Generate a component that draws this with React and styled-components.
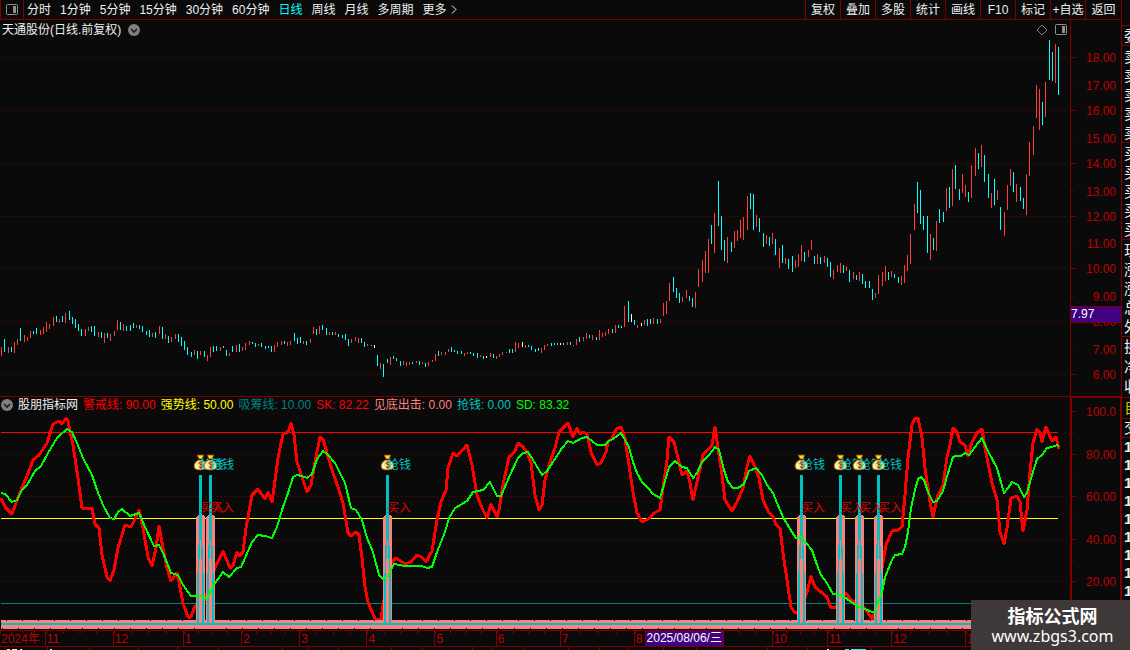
import React, { useState } from "react";
import styled, { createGlobalStyle } from "styled-components";

const GlobalStyle = createGlobalStyle`
    * {
        box-sizing: border-box;
    }
    body {
        margin: 0;
        background-color: #0a0a0a;
        font-family: "Liberation Sans", "Noto Sans CJK SC", sans-serif;
        font-size: 12px;
        color: #f0f0f0;
    }
`;

const Page = styled.div`
    display: grid;
    grid-template-columns: minmax(0, 1fr) 9px;
    min-height: 100vh;
    overflow: hidden;
`;

const Main = styled.main`
    display: flex;
    flex-direction: column;
    min-width: 0;
`;

const Toolbar = styled.nav`
    display: flex;
    justify-content: space-between;
    height: 20px;
    border-bottom: 1px solid #800000;
`;

const Periods = styled.div`
    display: flex;
    align-items: center;
    gap: 9px;
`;

const Tools = styled.div`
    display: flex;
`;

const LayoutButton = styled.button`
    display: flex;
    align-items: center;
    justify-content: center;
    width: 24px;
    height: 19px;
    margin-right: -6px;
    padding: 0;
    background: none;
    border: solid #800000;
    border-width: 0 1px;
`;

const PeriodButton = styled.button`
    display: flex;
    align-items: center;
    gap: 4px;
    padding: 0;
    border: none;
    background: none;
    font: inherit;
    line-height: 18px;
    white-space: nowrap;
    color: ${(props) => (props.$active ? "#00ffff" : "#f0f0f0")};
`;

const ToolButton = styled.button`
    width: 35px;
    padding: 0;
    border: none;
    border-left: 1px solid #800000;
    background: none;
    font: inherit;
    line-height: 18px;
    white-space: nowrap;
    color: #f0f0f0;
    &:last-child{
        width: 36px;
    }
`;

const Panel = styled.section`
    display: flex;
    border-top: ${(props) => (props.$divided ? "1px solid #800000" : "none")};
`;

const PanelBody = styled.div`
    flex: 1;
    min-width: 0;
`;

const TitleRow = styled.header`
    display: flex;
    align-items: center;
    justify-content: space-between;
    height: 18px;
    padding: 1px 3px 0 2px;
`;

const TitleGroup = styled.div`
    display: flex;
    align-items: center;
    gap: 7px;
`;

const Title = styled.h1`
    margin: 0;
    font-size: 12px;
    font-weight: 400;
    line-height: 18px;
`;

const Legend = styled.header`
    display: flex;
    align-items: center;
    gap: 5px;
    height: 16px;
    padding-left: 1px;
    white-space: nowrap;
`;

const LegendItem = styled.span`
    line-height: 16px;
    color: ${(props) => props.$color};
`;

const Plot = styled.svg`
    display: block;
    width: 100%;
    height: ${(props) => props.$height}px;
`;

const Axis = styled.svg`
    display: block;
    flex: none;
    width: 51px;
    height: ${(props) => props.$height}px;
`;

const TimeRow = styled.div`
    position: relative;
    display: flex;
    height: 17px;
    padding-right: 51px;
    border: solid #800000;
    border-width: 1px 0;
    color: #c00000;
`;

const Month = styled.div`
    flex: ${(props) => props.$days} 1 0;
    min-width: 0;
    padding-left: 1px;
    border-left: ${(props) => (props.$first ? "none" : "1px solid #800000")};
    background: linear-gradient(90deg, #800000 1px, transparent 1px) 0 0 / 25% 3px repeat-x;
    line-height: 16px;
    white-space: nowrap;
`;

const DateMarker = styled.div`
    position: absolute;
    top: -1px;
    left: 57.5%;
    padding: 0 1px;
    border: 1px solid #800000;
    background-color: #400080;
    color: #ffffff;
    line-height: 15px;
`;

const BottomStrip = styled.svg`
    display: block;
    width: 100%;
    height: 3px;
`;

const Sidebar = styled.aside`
    padding-top: 25px;
    border-left: 1px solid #800000;
    overflow: hidden;
`;

const QuoteGroup = styled.div`
    padding: ${(props) => props.$pad || 0}px 0 0 2px;
    border-top: 1px solid #800000;
    color: ${(props) => props.$color || "#f0f0f0"};
    font-size: 15px;
    font-weight: ${(props) => (props.$bold ? 700 : 400)};
    line-height: ${(props) => props.$line}px;
`;

const QuoteRow = styled.div`
    white-space: nowrap;
`;

const SiteBadge = styled.footer`
    position: fixed;
    right: 0;
    bottom: 0;
    display: flex;
    flex-direction: column;
    align-items: center;
    width: 159px;
    height: 50px;
    padding: 4px 0 0 4px;
    background-color: #3e3838;
    color: #ffffff;
`;

const SiteName = styled.strong`
    font-family: "Noto Sans CJK SC", sans-serif;
    font-size: 18px;
    line-height: 22px;
`;

const SiteLink = styled.a`
    font-family: "Noto Sans", sans-serif;
    font-size: 16px;
    line-height: 20px;
    color: #ffffff;
    text-decoration: none;
`;

const periods = ["分时", "1分钟", "5分钟", "15分钟", "30分钟", "60分钟", "日线", "周线", "月线", "多周期"];
const tools = ["复权", "叠加", "多股", "统计", "画线", "F10", "标记", "+自选", "返回"];

const legend = [
    ["股朋指标网", "#f0f0f0"],
    ["警戒线: 90.00", "#ff0000"],
    ["强势线: 50.00", "#ffff00"],
    ["吸筹线: 10.00", "#008080"],
    ["SK: 82.22", "#ff0000"],
    ["见底出击: 0.00", "#ff8080"],
    ["抢钱: 0.00", "#00c0c0"],
    ["SD: 83.32", "#00ff00"],
];

// label, width on the time scale; the date marker lies over the ninth month
const months = [
    ["2024年", 45], ["11", 68], ["12", 70], ["1", 58], ["2", 58], ["3", 67], ["4", 68],
    ["5", 61], ["6", 64], ["7", 74], ["8", 71], ["", 67], ["10", 55], ["11", 64], ["12", 74], ["1", 106],
];

const quoteGroups = [
    { rows: ["委"], line: 19 },
    { rows: ["卖", "卖", "卖", "卖", "卖"], line: 19, pad: 1 },
    { rows: ["买", "买", "买", "买", "买"], line: 19, pad: 1 },
    { rows: ["现", "涨", "涨", "总", "外"], line: 19, pad: 1 },
    { rows: ["换", "净", "收"], line: 20 },
    { rows: ["自"], line: 20, color: "#c8c800" },
    { rows: ["交"], line: 18 },
    { rows: ["1", "1", "1", "1", "1", "1", "1", "1", "1"], line: 18, bold: true },
];

// r = up, c = down, w = flat; x, high, low
const candles = `
r1,347,356 c4,339,352 r8,347,353 c11,347,352 r14,342,353 r17,339,345 c20,328,341 r24,335,342 r27,337,341
r30,331,338 c33,331,334 c36,328,334 r40,330,335 r43,327,334 r46,322,332 r49,324,329 r53,317,326 c56,316,322
r59,319,323 c62,316,322 r65,313,323 c69,311,320 c72,317,324 c75,319,328 c78,324,331 c81,329,336 r85,329,336
r88,327,331 c91,326,332 c94,326,336 r98,332,337 c101,332,338 r104,333,343 c107,333,338 r110,334,341 r114,331,336
r117,320,330 c120,322,330 r123,324,331 c126,326,331 c130,325,331 c133,323,328 r136,325,328 c139,325,329
c142,326,332 c146,331,335 c149,330,337 r152,333,337 c155,332,338 r159,326,334 c162,327,339 r165,334,339
c168,336,343 r171,337,342 r175,334,339 c178,334,342 c181,337,346 c184,341,350 c187,347,355 c191,352,357
r194,350,355 c197,351,359 r200,351,355 c204,351,357 r207,355,361 r210,347,357 c213,346,352 c216,346,351
r220,347,351 c223,346,348 c226,350,356 r229,353,356 c232,346,352 r236,345,352 c239,344,352 r242,347,351
r245,343,350 r249,341,345 c252,342,344 c255,343,347 r258,344,346 c261,343,347 c265,346,349 c268,346,348
c271,346,352 r274,345,352 r277,342,347 r281,341,345 c284,341,344 r287,342,346 r290,341,345 c294,333,341
c297,338,344 c300,337,343 r303,341,344 c306,341,345 r310,339,343 r313,327,334 c316,329,335 r319,326,334
c322,325,330 c326,328,335 r329,332,335 c332,332,335 r335,332,335 c338,334,337 c342,335,338 c345,334,340
c348,339,346 r351,339,343 r355,337,341 r358,338,343 c361,338,343 c364,342,347 r367,344,346 c371,345,346
w374,345,348 c377,355,366 r380,363,369 c383,364,377 c387,359,363 r390,357,365 c393,356,359 c396,358,361
c400,361,366 r403,361,365 r406,362,366 r409,362,365 c412,362,364 r416,361,363 c419,361,365 r422,362,364
c425,363,367 r428,362,366 r432,360,362 r435,354,361 c438,351,356 r441,352,355 r445,352,355 r448,349,352
c451,347,352 c454,350,352 c457,351,354 c461,351,354 r464,353,356 r467,352,354 c470,352,354 c473,353,356
c477,353,358 r480,355,357 c483,356,359 w486,356,358 r490,353,357 c493,354,358 r496,356,359 r499,354,357
r502,352,355 r506,352,353 c509,349,353 c512,349,353 r515,342,352 r518,343,348 w522,342,347 r525,345,348
c528,345,347 c531,346,350 c535,349,352 c538,348,351 r541,348,353 r544,345,350 r547,344,346 c551,343,346
c554,343,345 c557,343,345 w560,343,345 c563,343,345 r567,342,345 c570,342,345 r573,345,346 r576,339,345
c579,337,342 r583,337,341 r586,333,339 c589,335,338 r592,335,340 c596,337,340 r599,330,340 r602,333,337
r605,332,336 r608,329,334 c612,329,333 r615,325,333 c618,325,328 c621,326,328 r624,306,327 c628,301,322
w631,314,322 c634,320,325 r637,325,328 w641,323,326 r644,320,325 c647,319,326 c650,319,324 r653,318,324
c657,319,324 r660,319,323 r663,303,316 r666,301,314 r669,283,301 c673,277,292 c676,288,298 c679,293,303
r682,297,302 r686,290,298 c689,296,301 c692,298,307 r695,292,308 r698,269,287 r702,260,282 r705,251,273
r708,239,273 c711,225,244 r714,213,253 c718,181,226 c721,216,250 c724,240,261 r727,237,263 c731,242,252
r734,231,248 r737,230,241 r740,220,238 r743,217,240 r747,196,230 c750,193,209 c753,194,230 r756,215,227
c759,218,232 c763,233,247 r766,235,244 c769,237,246 r772,233,244 c775,239,255 r779,248,268 c782,245,263
r785,258,264 c788,259,269 c792,256,272 r795,260,268 r798,254,267 r801,245,261 c804,252,262 r808,250,257
r811,240,250 c814,256,264 r817,254,264 c820,257,264 r824,256,263 c827,258,267 c830,262,277 r833,270,279
r837,265,272 r840,263,273 c843,265,273 r846,266,271 c849,270,282 r853,272,279 c856,275,280 r859,272,281
c862,274,284 c865,281,288 c869,281,288 c872,289,300 r875,293,298 r878,275,294 r882,272,286 r885,266,281
c888,272,280 r891,271,277 c894,274,278 c898,277,283 r901,276,285 r904,265,283 r907,255,271 r910,234,264
r914,204,230 c917,182,213 c920,190,224 c923,216,230 c927,216,253 r930,234,260 c933,238,250 r936,221,251
c939,209,223 c943,212,222 r946,188,211 c949,187,208 r952,169,206 c955,165,189 c959,189,200 r962,174,193
r965,185,197 c968,192,202 r971,165,198 r975,148,176 c978,153,169 r981,145,167 c984,155,182 c988,174,198
r991,193,208 c994,179,205 r997,190,200 c1000,207,230 r1004,212,236 r1007,185,210 r1010,169,186 c1013,172,192
r1016,184,202 c1020,187,201 c1023,198,209 r1026,174,215 r1029,142,176 r1033,126,155 r1036,85,118 r1039,89,130
c1042,102,125 r1045,82,117 c1049,40,80 c1052,52,81 r1055,44,83 c1058,47,95`
    .trim()
    .split(/\s+/)
    .map((item) => {
        const [x, high, low] = item.slice(1).split(",").map(Number);
        return { kind: item[0], x, high, low };
    });

const candleColors = { r: "#ff3c3c", c: "#00ffff", w: "#ffffff" };

const skLine = `1,498 5,507 12,514 16,503 21,490 27,476 33,460 39,455 47,443 53,424 59,421 62,424 66,418 68,421
73,445 78,478 82,508 86,509 92,508 95,524 99,528 102,555 107,577 110,581 114,570 118,548 125,525 131,527
135,519 139,510 143,528 148,557 152,566 156,548 159,526 163,548 167,568 171,581 177,573 179,582 183,603
188,617 191,617 195,606 205,600 215,568 223,551 230,568 233,566 237,552 239,556 243,552 246,528 252,495
258,489 265,499 268,492 272,502 274,488 278,458 283,434 288,432 291,423 294,435 297,462 302,477 307,492
311,485 315,462 320,437 323,439 327,453 333,473 338,487 343,503 348,533 351,536 356,532 359,535 362,558
365,587 368,602 375,619 381,620 383,605 392,562 396,558 405,564 411,562 417,555 423,558 426,562 432,551
437,520 441,502 446,490 448,468 453,453 457,456 467,445 472,465 477,495 482,508 487,518 491,504 497,517
499,510 503,485 509,457 514,453 518,443 523,447 527,452 531,463 535,495 539,510 542,505 545,480 550,462
555,448 559,432 563,428 568,423 573,437 577,428 580,434 583,432 587,434 591,452 597,465 601,463 606,452
608,441 612,439 616,429 621,427 625,438 629,465 633,492 637,513 642,522 650,518 654,513 660,510 663,488
667,460 669,437 674,442 678,458 682,475 687,471 690,483 693,500 697,482 703,455 712,445 715,427 718,448
722,475 725,500 732,511 737,502 743,488 747,467 750,456 755,467 759,478 763,500 769,513 773,516 776,525
780,528 783,553 787,580 791,607 795,613 801,610 807,592 811,576 815,587 821,592 827,597 831,608 836,607
846,593 851,600 855,602 865,608 872,619 875,612 883,562 886,545 892,531 898,530 902,527 905,495 908,458
912,425 915,418 918,418 922,438 925,468 930,502 933,517 937,498 943,485 947,457 950,445 953,428 957,432
960,442 965,445 968,456 972,442 977,433 982,429 984,442 987,458 992,483 997,500 1000,532 1004,544 1007,528
1011,498 1017,496 1020,502 1023,531 1027,510 1030,472 1033,443 1037,429 1040,433 1042,442 1046,427 1049,434
1052,441 1056,437 1059,449`;

const sdLine = `1,493 5,494 12,502 17,500 22,490 27,485 35,471 41,466 48,453 57,438 67,429 72,432 77,443 83,458
92,475 97,490 103,505 110,518 114,519 118,512 122,509 130,516 139,513 145,527 154,546 159,545 164,555 171,573
178,575 183,585 191,596 200,596 207,599 213,586 218,579 223,572 229,577 237,568 241,567 245,558 252,542
258,535 265,536 272,538 277,527 283,507 288,493 293,477 297,475 302,476 307,478 312,474 317,459 323,451
327,454 335,463 345,483 351,508 356,510 362,520 367,538 373,552 379,575 383,579 388,576 394,564 405,566
422,566 427,568 432,567 437,552 445,532 449,518 455,508 467,501 473,492 483,490 490,482 497,496 501,496
510,475 518,458 523,453 528,452 533,460 542,475 547,471 553,462 562,448 568,441 573,443 582,438 587,437
597,445 605,445 609,441 613,439 621,433 629,447 633,462 637,473 642,482 648,488 653,494 660,498 663,488
669,467 675,461 682,467 687,468 693,478 697,473 702,462 709,455 715,447 719,450 724,470 728,482 733,488
738,488 744,484 749,471 756,468 762,475 767,485 773,493 777,503 783,517 790,529 796,538 801,537 806,543
812,550 817,565 821,575 827,583 833,594 841,595 847,599 857,606 865,609 872,612 875,612 878,602 882,592
885,577 892,560 895,555 902,554 905,547 908,532 911,508 915,490 918,479 921,477 924,480 928,492 933,502
937,501 943,491 948,473 953,457 956,456 961,456 965,453 969,455 975,447 982,438 988,451 997,468 1004,493
1008,488 1012,482 1018,485 1024,497 1027,493 1032,475 1037,459 1042,455 1047,448 1052,447 1057,445 1059,447`;

const signals = [200, 210, 387, 801, 840, 859, 878];

const priceTicks = [
    ["18.00", 57], ["17.00", 85], ["16.00", 110], ["15.00", 138], ["14.00", 163], ["13.00", 191], ["12.00", 216],
    ["11.00", 243], ["10.00", 268], ["9.00", 296], ["8.00", 321], ["7.00", 349], ["6.00", 374],
];

const levelTicks = [["100.0", 411], ["80.00", 454], ["60.00", 496], ["40.00", 539], ["20.00", 581]];

const stripTicks = [
    5, 47, 89, 138, 177, 218, 282, 308, 338, 391, 422, 472, 492, 523, 568, 599, 628, 663, 696, 767, 807, 871,
];

const CollapseIcon = () => (
    <svg width="12" height="12" viewBox="0 0 12 12" aria-hidden="true">
        <circle cx="6" cy="6" r="6" fill="#808080" />
        <path d="M3 5l3 3 3-3" fill="none" stroke="#1c1c1c" strokeWidth="1.6" />
    </svg>
);

const PanelIcon = () => (
    <svg width="12" height="11" viewBox="0 0 12 11" aria-hidden="true">
        <rect x="0.5" y="0.5" width="11" height="10" rx="1" fill="none" stroke="#909090" />
        <rect x="7" y="2" width="3" height="7" fill="#909090" />
    </svg>
);

const MoneyBag = ({ x }) => (
    <g transform={`translate(${x - 6} 455)`}>
        <path d="M4 5C1 7 0 9 0 11c0 3 2 4 6 4s7-1 7-4c0-2-1-4-4-6z" fill="#f4e46a" stroke="#6b3a1e" strokeWidth="0.8" />
        <path d="M3 0h7L8 4H5z" fill="#ffe000" stroke="#6b3a1e" strokeWidth="0.8" />
        <path d="M2 9c0 2 0 3 2 4" fill="none" stroke="#fffbd0" strokeWidth="1.4" />
        <path d="M9 7.500C7 6 5 7 5 8.300s4 1.200 4 2.700-2.600 2-4 .8M7 6v8" fill="none" stroke="#8a1c1c" strokeWidth="1" />
    </g>
);

const PriceChart = () => (
    <Plot $height={358} viewBox="0 38 1070 358" preserveAspectRatio="none" shapeRendering="crispEdges">
        {priceTicks.filter((tick, i) => i % 2 === 0).map(([label, y]) => (
            <line key={label} x1="1" x2="1067" y1={y + 0.5} y2={y + 0.5} stroke="#800000" strokeDasharray="1 3" />
        ))}
        {candles.map(({ kind, x, high, low }) => (
            <rect key={x} x={x} y={high} width="1" height={low - high} fill={candleColors[kind]} />
        ))}
    </Plot>
);

const PriceAxis = () => (
    <Axis $height={376} viewBox="0 20 51 376">
        <rect x="0" y="20" width="1" height="376" fill="#800000" />
        {priceTicks.map(([label, y], i) => (
            <g key={label}>
                <rect x="1" y={y} width={i % 2 ? 2 : 5} height="1" fill="#800000" />
                <text x="46" y={y + 5} textAnchor="end" fill="#c00000">{label}</text>
            </g>
        ))}
        <rect x="1" y="306" width="50" height="17" fill="#800000" />
        <rect x="1" y="307" width="50" height="15" fill="#400080" />
        <text x="1" y="318" fill="#ffffff">7.97</text>
    </Axis>
);

const IndicatorChart = () => (
    <Plot $height={217} viewBox="0 413 1070 217" preserveAspectRatio="none" shapeRendering="crispEdges">
        {levelTicks.slice(1).map(([label, y]) => (
            <line key={label} x1="1" x2="1067" y1={y + 0.5} y2={y + 0.5} stroke="#800000" strokeDasharray="1 3" />
        ))}
        <rect x="1" y="432" width="1057" height="1" fill="#ff0000" />
        <rect x="1" y="518" width="1057" height="1" fill="#ffff00" />
        <rect x="1" y="603" width="1057" height="1" fill="#008080" />
        <polyline points={skLine} fill="none" stroke="#ff0000" strokeWidth="3" strokeLinejoin="round" />
        <rect x="1" y="620" width="1057" height="9" fill="#ff8080" />
        <line x1="6" x2="1058" y1="620.5" y2="620.5" stroke="#0a0a0a" strokeDasharray="1 15" />
        <line x1="2" x2="1058" y1="628.5" y2="628.5" stroke="#0a0a0a" strokeDasharray="1 15" />
        {signals.map((x) => (
            <path key={x} d={`M${x - 4} 629V517l2-2h5l2 2v112z`} fill="#ff8080" />
        ))}
        <rect x="1" y="623" width="1057" height="2" fill="#00c0c0" />
        {signals.map((x) => (
            <g key={x}>
                <path d={`M${x - 2} 624V580L${x} 525M${x + 3} 624V580L${x + 1} 525`} fill="none" stroke="#00c0c0" strokeWidth="1.5" />
                <rect x={x - 1} y="475" width="3" height="65" fill="#00c0c0" />
            </g>
        ))}
        <polyline points={sdLine} fill="none" stroke="#00ff00" strokeWidth="2" strokeLinejoin="round" />
        {signals.map((x) => (
            <g key={x} shapeRendering="auto">
                <MoneyBag x={x} />
                <text x={x} y="469" fill="#00c0c0">抢钱</text>
                <text x={x} y="512" fill="#e00000">买入</text>
            </g>
        ))}
    </Plot>
);

const IndicatorAxis = () => (
    <Axis $height={233} viewBox="0 397 51 233">
        <rect x="0" y="397" width="2" height="233" fill="#800000" />
        <rect x="0" y="397" width="51" height="1" fill="#800000" />
        <rect x="50" y="397" width="1" height="233" fill="#800000" />
        {levelTicks.map(([label, y]) => (
            <g key={label}>
                <rect x="2" y={y} width="4" height="1" fill="#800000" />
                <rect x="2" y={y + 21} width="1" height="1" fill="#800000" />
                <text x="46" y={y + 5} textAnchor="end" fill="#c00000">{label}</text>
            </g>
        ))}
    </Axis>
);

const App = () => {
    const [period, setPeriod] = useState("日线");

    return (
        <>
        <GlobalStyle />
        <Page>
            <Main>
                <Toolbar>
                    <Periods>
                        <LayoutButton type="button" aria-label="布局"><PanelIcon /></LayoutButton>
                        {periods.map((name) => (
                            <PeriodButton
                                key={name}
                                type="button"
                                $active={name === period}
                                onClick={() => setPeriod(name)}>
                                {name}
                            </PeriodButton>
                        ))}
                        <PeriodButton type="button">
                            更多
                            <svg width="6" height="9" viewBox="0 0 6 9" aria-hidden="true">
                                <path d="M1 0.500l4 4-4 4" fill="none" stroke="#f0f0f0" />
                            </svg>
                        </PeriodButton>
                    </Periods>
                    <Tools>
                        {tools.map((name) => <ToolButton key={name} type="button">{name}</ToolButton>)}
                    </Tools>
                </Toolbar>
                <Panel>
                    <PanelBody>
                        <TitleRow>
                            <TitleGroup>
                                <Title>天通股份(日线.前复权)</Title>
                                <CollapseIcon />
                            </TitleGroup>
                            <TitleGroup>
                                <svg width="12" height="12" viewBox="0 0 12 12" aria-hidden="true">
                                    <path d="M6 1l5 5-5 5-5-5z" fill="none" stroke="#808080" />
                                </svg>
                                <PanelIcon />
                            </TitleGroup>
                        </TitleRow>
                        <PriceChart />
                    </PanelBody>
                    <PriceAxis />
                </Panel>
                <Panel $divided>
                    <PanelBody>
                        <Legend>
                            <CollapseIcon />
                            {legend.map(([text, color]) => (
                                <LegendItem key={text} $color={color}>{text}</LegendItem>
                            ))}
                        </Legend>
                        <IndicatorChart />
                    </PanelBody>
                    <IndicatorAxis />
                </Panel>
                <TimeRow>
                    {months.map(([label, days], i) => (
                        <Month key={i} $days={days} $first={i === 0}>{label}</Month>
                    ))}
                    <DateMarker>2025/08/06/三</DateMarker>
                </TimeRow>
                <BottomStrip viewBox="0 0 1121 3" preserveAspectRatio="none" shapeRendering="crispEdges">
                    {stripTicks.map((x) => <rect key={x} x={x} y="0" width="1" height="3" fill="#800000" />)}
                    <path d="M7 2h3v1h-3zM12 2h5v1h-5zM20 2h2v1h-2zM50 2h2v1h-2zM827 2h2v1h-2z" fill="#f0f0f0" />
                    <path d="M845 2h4v1h-4zM851 2h15v1h-15z" fill="#00ffff" />
                </BottomStrip>
            </Main>
            <Sidebar>
                {quoteGroups.map((group, i) => (
                    <QuoteGroup key={i} $line={group.line} $pad={group.pad} $color={group.color} $bold={group.bold}>
                        {group.rows.map((text, n) => <QuoteRow key={n}>{text}</QuoteRow>)}
                    </QuoteGroup>
                ))}
            </Sidebar>
        </Page>
        <SiteBadge>
            <SiteName>指标公式网</SiteName>
            <SiteLink href="#">www.zbgs3.com</SiteLink>
        </SiteBadge>
        </>
    )
}

export default App
